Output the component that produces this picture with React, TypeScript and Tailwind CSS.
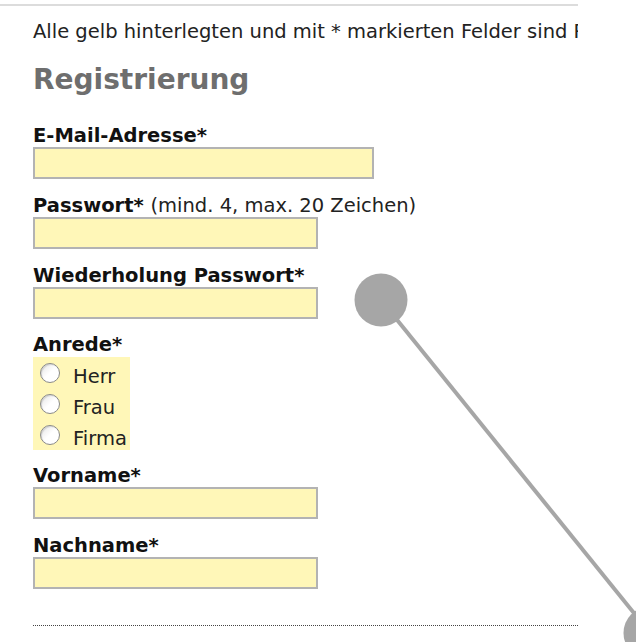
import React from "react";

const Label = ({ children }: { children: React.ReactNode }) => (
  <div className="h-[23px] leading-[23px] font-bold text-[#111] whitespace-nowrap">{children}</div>
);

const Field = ({ w }: { w: string }) => (
  <input
    type="text"
    className={`${w} block h-[32px] border-2 border-[#b3b3b3] bg-[#fff7b8] outline-none`}
  />
);

const Radio = ({ label }: { label: string }) => (
  <label className="flex h-[31px] items-center">
    <span className="ml-[7px] inline-block h-[20px] w-[20px] rounded-full border-[1.5px] border-[#8a8a8a] bg-gradient-to-br from-[#e4e4e4] via-white to-white shadow-[inset_1px_1px_1px_rgba(0,0,0,0.12)]" />
    <span className="relative top-[4px] ml-[13px] text-[#222]">{label}</span>
  </label>
);

export default function App() {
  return (
    <div
      className="relative h-[642px] w-[636px] overflow-hidden bg-white text-[19.5px] text-[#222]"
      style={{ fontFamily: '"DejaVu Sans", Verdana, sans-serif' }}
    >
      <div className="w-[578px] overflow-hidden pt-[4px]">
        <div className="h-[2px] bg-[#dcdcdc]" />
        <div className="pl-[33px]">
          <p className="mt-[14px] h-[24px] leading-[24px] whitespace-nowrap">
            Alle gelb hinterlegten und mit * markierten Felder sind Pflichtfelder.
          </p>
          <h2 className="mt-[19px] h-[34px] text-[28px] leading-[34px] font-bold text-[#6e6e6e]">
            Registrierung
          </h2>
          <div className="mt-[27px]">
            <Label>E-Mail-Adresse*</Label>
            <Field w="w-[341px]" />
          </div>
          <div className="mt-[15px]">
            <Label>
              Passwort* <span className="font-normal text-[#222]">(mind. 4, max. 20 Zeichen)</span>
            </Label>
            <Field w="w-[285px]" />
          </div>
          <div className="mt-[15px]">
            <Label>Wiederholung Passwort*</Label>
            <Field w="w-[285px]" />
          </div>
          <div className="mt-[14px]">
            <Label>Anrede*</Label>
            <div className="mt-[1px] w-[97px] bg-[#fff7b8]">
              <Radio label="Herr" />
              <Radio label="Frau" />
              <Radio label="Firma" />
            </div>
          </div>
          <div className="mt-[14px]">
            <Label>Vorname*</Label>
            <Field w="w-[285px]" />
          </div>
          <div className="mt-[15px]">
            <Label>Nachname*</Label>
            <Field w="w-[285px]" />
          </div>
          <div className="mt-[36px] border-t border-dotted border-[#444]" />
        </div>
      </div>
      <svg
        className="pointer-events-none absolute left-0 top-0"
        width="636"
        height="642"
        viewBox="0 0 636 642"
      >
        <line x1="381" y1="300" x2="650" y2="633" stroke="#a6a6a6" strokeWidth="4" />
        <circle cx="381" cy="300" r="26.5" fill="#a6a6a6" />
        <circle cx="650" cy="633" r="26.5" fill="#a6a6a6" />
      </svg>
    </div>
  );
}
